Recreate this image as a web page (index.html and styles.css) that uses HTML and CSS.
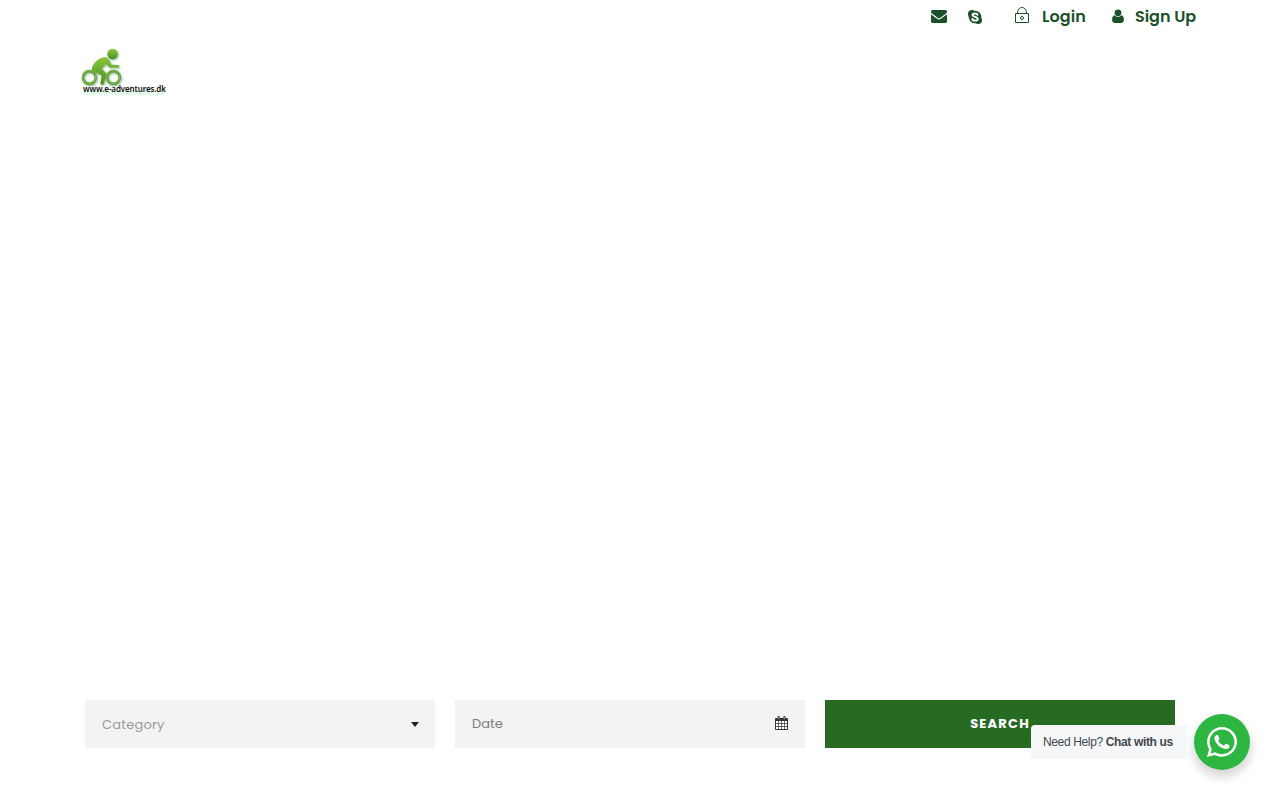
FILE: index.html
```html
<!DOCTYPE html>
<html lang="en">
<head>
  <meta charset="UTF-8">
  <meta name="viewport" content="width=device-width, initial-scale=1.0">
  <title>E-Adventures</title>
  <link rel="stylesheet" href="styles.css">
</head>
<body>
  <div class="top-bar">
    <a class="social mail" href="#" aria-label="Email">
      <svg width="16" height="13" viewBox="0 256 1792 1408" preserveAspectRatio="none"><path fill="currentColor" d="M1792 710v794q0 66-47 113t-113 47h-1472q-66 0-113-47t-47-113v-794q44 49 101 87 362 246 497 345 57 42 92.5 65.5t94.5 48 110 24.5h2q51 0 110-24.5t94.5-48 92.5-65.5q170-123 498-345 57-39 100-87zm0-294q0 79-49 151t-122 123q-376 261-468 325-10 7-42.5 31t-54 38.5-52 32.5-57.5 27-50 9h-2q-23 0-50-9t-57.5-27-52-32.5-54-38.5-42.5-31q-91-64-262-182.5t-205-142.5q-62-42-117-115.5t-55-136.5q0-78 41.5-130t118.5-52h1472q65 0 112.5 47t47.5 113z"/></svg>
    </a>
    <a class="social skype" href="#" aria-label="Skype">
      <svg width="14" height="14" viewBox="0 0 14 14"><circle cx="7" cy="7" r="6.3" fill="currentColor"/><circle cx="3.9" cy="3.9" r="3.9" fill="currentColor"/><circle cx="10.1" cy="10.1" r="3.9" fill="currentColor"/><path d="M9.5 4.800C9 3 4.500 2.900 4.500 5C4.500 7.200 9.700 6.500 9.700 8.900C9.700 11.200 4.600 11.100 4.300 9" fill="none" stroke="#fff" stroke-width="2" stroke-linecap="round"/></svg>
    </a>
    <a class="account login" href="#">
      <svg width="14" height="16" viewBox="0 0 14 16" fill="none" stroke="currentColor"><path d="M.5 6.5h13v9H.5zM2.7 6.5V4.8a4.3 4.3 0 0 1 8.6 0v1.7"/><circle cx="7" cy="11" r="1.5"/></svg>
      <span>Login</span>
    </a>
    <a class="account signup" href="#">
      <svg width="12" height="14" viewBox="0 0 12 14" fill="currentColor"><circle cx="6" cy="3.8" r="3.4"/><path d="M2.7 6.3C.8 6.6.1 8.6.1 11.1C.1 12.9 1.1 13.9 2.6 13.9H9.4C10.9 13.9 11.9 12.9 11.9 11.1C11.9 8.6 11.2 6.6 9.3 6.3C8.3 7.5 7.3 8 6 8S3.7 7.500 2.700 6.300z"/></svg>
      <span>Sign Up</span>
    </a>
  </div>

  <header class="header">
    <a class="logo" href="#">
      <svg class="rider" width="44" height="39" viewBox="0 0 44 39" fill="none">
        <defs>
          <linearGradient id="green" x1="0" y1="0" x2="0" y2="1">
            <stop offset="0" stop-color="#8ac63c"/>
            <stop offset="1" stop-color="#4b9122"/>
          </linearGradient>
        </defs>
        <circle cx="9.3" cy="29.5" r="6.400" stroke="#5d9c30" stroke-width="2.600"/>
        <circle cx="33.4" cy="29.5" r="6.400" stroke="#5d9c30" stroke-width="2.600"/>
        <circle cx="9.1" cy="29.2" r="6.500" stroke="#93c75a" stroke-width=".8"/>
        <circle cx="33.2" cy="29.2" r="6.500" stroke="#93c75a" stroke-width=".8"/>
        <circle cx="32.5" cy="6" r="5.200" fill="url(#green)"/>
        <path d="M12 19.5C14 14 19 9.5 25 9.2c2-.1 3 1 4 3l2.500 4.500 6.500.2c1.800.2 1.600 2.600 0 2.700l-8.200.2-4-3.800-4.300 4.500 4.200 4.200c.9 1 .8 2 .4 3.200l-2.600 8.200c-.8 1.500-3.300.8-3.100-1l1.300-7.500-8-4.200c-1.600-.9-2.300-2-1.700-3.700z" fill="url(#green)"/>
      </svg>
      <span class="logo-text">www.e-adventures.dk</span>
    </a>
  </header>

  <form class="search">
    <div class="field category">
      <span>Category</span>
      <span class="caret"></span>
    </div>
    <div class="field date">
      <span>Date</span>
      <svg width="13" height="14" viewBox="0 0 13 14"><path fill="#333" d="M1 2h11q1 0 1 1v10q0 1-1 1H1q-1 0-1-1V3q0-1 1-1z"/><path fill="#fff" d="M1 5h2.200v2.300H1zM3.900 5h2.300v2.300H3.900zM6.900 5h2.200v2.300H6.900zM9.800 5H12v2.300H9.800zM1 8h2.200v2.300H1zM3.900 8h2.300v2.300H3.900zM6.900 8h2.200v2.300H6.900zM9.800 8H12v2.300H9.800zM1 11h2.200v2H1zM3.900 11h2.300v2H3.900zM6.900 11h2.200v2H6.900zM9.800 11H12v2H9.800z"/><path fill="#fff" stroke="#333" stroke-width=".9" d="M3 .5h1.300v3H3zM8.800.5h1.300v3H8.800z"/></svg>
    </div>
    <button class="search-button" type="button">SEARCH</button>
  </form>

  <div class="chat">
    <div class="chat-label"><span>Need Help? <b>Chat with us</b></span></div>
    <a class="chat-button" href="#" aria-label="WhatsApp">
      <svg width="30" height="30" viewBox="0 32 448 448" preserveAspectRatio="none"><path fill="#fff" d="M380.900 97.100C339 55.100 283.200 32 223.900 32c-122.400 0-222 99.600-222 222 0 39.100 10.200 77.300 29.600 111L0 480l117.700-30.900c32.400 17.700 68.900 27 106.100 27h.1c122.300 0 224.100-99.600 224.100-222 0-59.300-25.200-115-67.100-157zm-157 341.600c-33.200 0-65.700-8.900-94-25.700l-6.700-4-69.800 18.300L72 359.200l-4.400-7c-18.500-29.400-28.200-63.300-28.200-98.200 0-101.700 82.800-184.500 184.600-184.500 49.300 0 95.600 19.200 130.400 54.100 34.800 34.900 56.200 81.200 56.100 130.500 0 101.800-84.900 184.600-186.600 184.600zm101.200-138.200c-5.500-2.800-32.800-16.200-37.900-18-5.100-1.900-8.800-2.800-12.500 2.800-3.700 5.600-14.300 18-17.600 21.800-3.200 3.700-6.500 4.200-12 1.400-32.600-16.300-54-29.100-75.500-66-5.700-9.800 5.700-9.100 16.300-30.300 1.800-3.700.9-6.900-.5-9.700-1.400-2.800-12.500-30.100-17.100-41.200-4.500-10.800-9.100-9.300-12.500-9.500-3.200-.2-6.900-.2-10.600-.2-3.700 0-9.700 1.400-14.800 6.900-5.100 5.600-19.400 19-19.400 46.300 0 27.300 19.900 53.700 22.600 57.400 2.800 3.700 39.100 59.700 94.800 83.800 35.200 15.200 49 16.500 66.600 13.900 10.700-1.600 32.800-13.400 37.400-26.400 4.600-13 4.600-24.100 3.200-26.400-1.300-2.500-5-3.900-10.500-6.600z"/></svg>
    </a>
  </div>
</body>
</html>
```
FILE: styles.css
```css
* {
  box-sizing: border-box;
}
body {
  margin: 0;
  height: 800px;
  display: flex;
  flex-direction: column;
  background: #fff;
  font-family: Poppins, Inter, sans-serif;
  overflow: hidden;
}
a {
  color: #1b5128;
  text-decoration: none;
}
svg {
  display: block;
  flex: none;
}

/* Top bar */
.top-bar {
  display: flex;
  justify-content: flex-end;
  align-items: center;
  height: 33px;
  padding-right: 84px;
}
.skype {
  margin-left: 21px;
}
.account {
  display: flex;
  align-items: center;
  font-size: 16px;
  font-weight: 600;
  letter-spacing: .1px;
  white-space: nowrap;
}
.login {
  width: 71px;
  gap: 13px;
  margin-left: 33px;
}
.login svg {
  margin-top: -3px;
}
.signup {
  width: 84px;
  gap: 11px;
  margin-left: 26px;
  letter-spacing: -.05px;
}
.signup svg {
  margin-top: -1px;
}

/* Logo */
.header {
  padding: 15px 80px 0;
}
.logo {
  display: block;
  width: 90px;
}
.rider {
  filter: drop-shadow(1px 1px 1px rgba(40, 120, 70, .55));
}
.logo-text {
  display: block;
  margin: -3px 0 0 3px;
  color: #111;
  font: 600 8px/10px "Noto Sans", "Open Sans", sans-serif;
  letter-spacing: -.12px;
  white-space: nowrap;
  text-shadow: 0 3px 2px rgba(100, 230, 120, .4);
}

/* Search form */
.search {
  display: grid;
  grid-template-columns: repeat(3, 350px);
  gap: 20px;
  height: 48px;
  margin: auto 0 52px 85px;
}
.field {
  display: flex;
  align-items: center;
  justify-content: space-between;
  padding: 0 17px;
  background: #f3f3f3;
  color: #999;
  font-size: 13px;
}
.category {
  padding: 1px 16px 0 17px;
  letter-spacing: .2px;
}
.date {
  padding-bottom: 1px;
  color: #7d7d7d;
}
.date svg {
  margin-top: -1px;
}
.caret {
  margin-top: -1px;
  border: 4px solid transparent;
  border-top: 5px solid #222;
  border-bottom: 0;
}
.search-button {
  padding: 0 0 1px;
  border: 0;
  background: #276b22;
  color: #fff;
  font: bold 13px Poppins, Inter, sans-serif;
  letter-spacing: 1.2px;
}

/* WhatsApp chat */
.chat {
  position: fixed;
  right: 30px;
  bottom: 30px;
  display: flex;
  align-items: center;
  gap: 7px;
}
.chat-label {
  width: 156px;
  height: 34px;
  padding-left: 12px;
  border-radius: 4px;
  background: #f5f7f9;
  color: #43474e;
  font: 12px/34px "Liberation Sans", Arial, sans-serif;
  letter-spacing: -.36px;
  white-space: nowrap;
}
.chat-button {
  display: flex;
  align-items: center;
  justify-content: center;
  width: 56px;
  height: 56px;
  border-radius: 50%;
  background: #2db742;
  box-shadow: 0 6px 8px 2px rgba(0, 0, 0, .14);
}
```
